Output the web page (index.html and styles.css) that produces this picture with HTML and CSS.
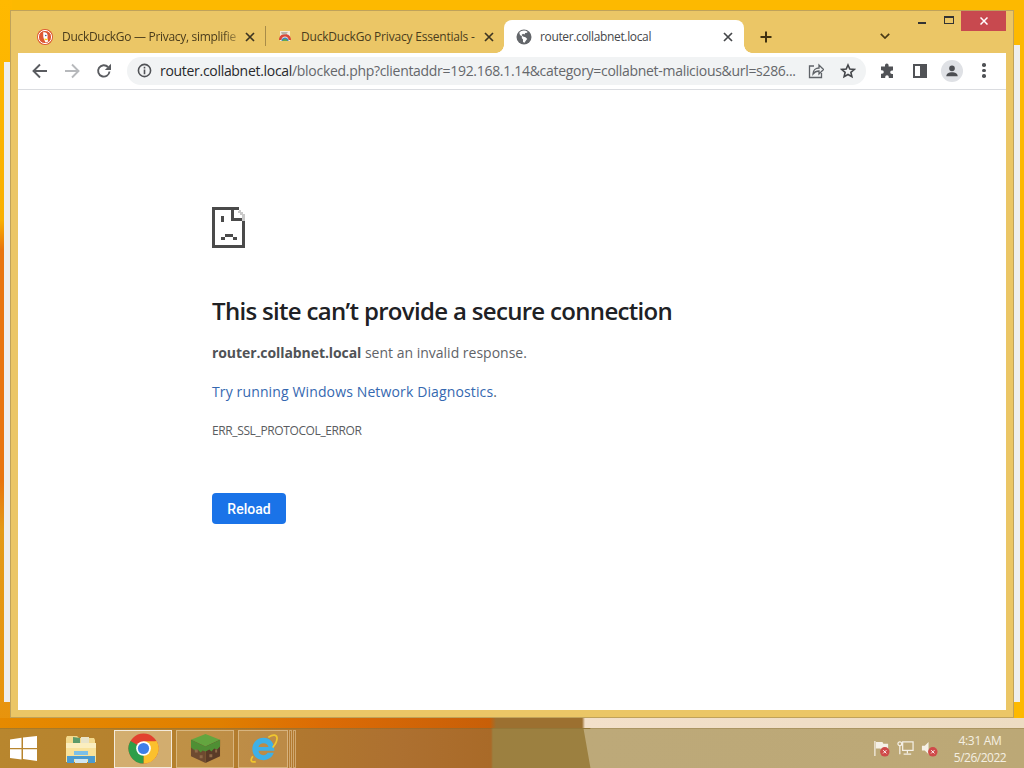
FILE: index.html
```html
<!DOCTYPE html>
<html lang="en">
<head>
<meta charset="utf-8">
<title>router.collabnet.local</title>
<link rel="stylesheet" href="styles.css">
</head>
<body>
<div class="desktop">
  <div class="strip strip-left"></div>
  <div class="strip strip-right"></div>
  <div class="window">
    <div class="tabstrip">
      <div class="tab tab-one">
        <svg class="favicon" viewBox="0 0 16 16"><circle cx="8" cy="8" r="8" fill="#de5833"/><circle cx="8" cy="8" r="6.6" fill="none" stroke="#fff" stroke-width="1"/><path d="M6 3.600c2.200-.8 4.400.4 4.600 2.800.1 1.300-.2 2-.1 3 .1 1.200.6 2.300.8 3.200l-2.800.8c-.8-1.500-1.900-3.600-2.200-5.600C6.100 6.300 6.500 5 6 3.600z" fill="#fff"/><circle cx="8.800" cy="6.500" r=".8" fill="#2d4f8e"/><path d="M7.500 9.500l3 .6-.2 1.200-2.600-.4z" fill="#fdd20a"/></svg>
        <span class="tab-title fade">DuckDuckGo — Privacy, simplifie</span>
        <svg class="tab-x" viewBox="0 0 10 10"><path d="M1 1l8 8M9 1l-8 8"/></svg>
      </div>
      <div class="divider"></div>
      <div class="tab tab-two">
        <svg class="favicon" viewBox="0 0 16 16"><path d="M3 2h10v10H3z" fill="#f4e9d8"/><path d="M2 11c0-4 3-6 6-6s6 2 6 6h-2.500c0-2-1.500-3.500-3.500-3.500S4.500 9 4.500 11z" fill="#d9483b"/><path d="M4.500 12c0-2 1.500-3.400 3.500-3.400S11.500 10 11.500 12z" fill="#3f7fd1"/><path d="M4 3h7l-2 2.500H5z" fill="#b9b2a6"/><path d="M5.500 12c0-1.300 1.100-2.200 2.500-2.200s2.500.9 2.500 2.200z" fill="#63a84e"/></svg>
        <span class="tab-title">DuckDuckGo Privacy Essentials -</span>
        <svg class="tab-x" viewBox="0 0 10 10"><path d="M1 1l8 8M9 1l-8 8"/></svg>
      </div>
      <div class="tab tab-active">
        <svg class="favicon" viewBox="0 0 16 16"><circle cx="8" cy="8" r="7.500" fill="#63666a"/><path d="M8 1.500c-2 0-3.500.8-4.700 2.200l.7 2.300 2 1.500-.3 1.500 1.300 1.500v2.500l1.500.8 1.800-2.800 1-1-1.800-1.800-2.500-.7L5.500 6 7 4.800l1.500.7.700-1.500 2-.3.300-1C10.500 1.900 9.300 1.500 8 1.500z" fill="#fff"/></svg>
        <span class="tab-title">router.collabnet.local</span>
        <svg class="tab-x" viewBox="0 0 10 10"><path d="M1 1l8 8M9 1l-8 8"/></svg>
      </div>
      <svg class="newtab" viewBox="0 0 12 12"><path d="M6 .5v11M.5 6h11"/></svg>
      <svg class="chevron" viewBox="0 0 10 6"><path d="M.8.8L5 5l4.200-4.200"/></svg>
      <div class="caption">
        <span class="cap-btn"><span class="cap-min"></span></span>
        <span class="cap-btn"><span class="cap-max"></span></span>
        <span class="cap-close"><svg viewBox="0 0 8 8"><path d="M.5.5l7 7M7.500.5l-7 7"/></svg></span>
      </div>
    </div>
    <div class="toolbar">
      <svg class="nav" viewBox="0 0 16 16"><path d="M15 8H2M8 1.500L1.500 8 8 14.500"/></svg>
      <svg class="nav nav-off" viewBox="0 0 16 16"><path d="M1 8h13M8 1.500L14.500 8 8 14.500"/></svg>
      <svg class="nav" viewBox="0 0 16 16"><path d="M13.500 8.500A5.700 5.700 0 1 1 12 4"/><path class="solid" d="M15 .8v6.200H8.800z"/></svg>
      <div class="omnibox">
        <svg class="info" viewBox="0 0 16 16"><circle cx="8" cy="8" r="6.500"/><path d="M8 7v5M8 4v1.800"/></svg>
        <span class="url"><span class="host">router.collabnet.local</span>/blocked.php?clientaddr=192.168.1.14&amp;category=collabnet-malicious&amp;url=s286...</span>
        <svg class="omni-icon share" viewBox="0 0 16 16"><path d="M6 3H1.500v11.500h12V10"/><path d="M5 11c0-4 3-6 6-6V2l4.500 4.500L11 11V8c-2.500 0-4.500 1-6 3z"/></svg>
        <svg class="omni-icon star" viewBox="0 0 16 16"><path d="M8 2l1.800 4.100 4.400.4-3.300 2.900 1 4.300L8 11.500l-3.900 2.200 1-4.300-3.300-2.900 4.400-.4z"/></svg>
      </div>
      <svg class="tool puzzle" viewBox="0 0 16 16"><path d="M6 2.300a1.800 1.800 0 0 1 3.600 0V3.500H14v4h-1a1.800 1.800 0 0 0 0 3.600h1V15H9.800v-1a1.800 1.800 0 0 0-3.600 0v1H2v-4.200h1a1.800 1.800 0 0 0 0-3.600H2V3.500h4z"/></svg>
      <span class="panel"><span class="panel-side"></span></span>
      <span class="avatar"><svg viewBox="0 0 16 16"><circle cx="8" cy="5" r="3.200"/><path d="M1.500 14c0-3 3-4.500 6.500-4.500s6.500 1.500 6.500 4.500z"/></svg></span>
      <span class="menu"><i></i><i></i><i></i></span>
    </div>
    <div class="page">
      <svg class="sad" viewBox="0 0 33 41" shape-rendering="crispEdges"><path d="M0 0h27v3H3v35h27V14h3v27H0z"/><path d="M19 0h3v11h11v3H19z"/><path d="M27 3h2v2h2v2h2v7h-3V8h-2V6h-2z" fill="#c9c9c9"/><path d="M9 9h3v6H9zM13 27h8v3h4v3h-4v-3h-8v3H9v-3h4z"/></svg>
      <h1 class="title">This site can’t provide a secure connection</h1>
      <p class="para"><strong>router.collabnet.local</strong> sent an invalid response.</p>
      <p class="para para-link"><a class="link" href="#">Try running Windows Network Diagnostics</a>.</p>
      <div class="code">ERR_SSL_PROTOCOL_ERROR</div>
      <button class="reload">Reload</button>
    </div>
  </div>
  <div class="taskbar">
    <svg class="start" viewBox="0 0 27 25"><path d="M0 3.500l11.500-1.700v10.200H0zM13 1.600L27 0v12H13zM0 13.300h11.500v10.300L0 22zM13 13.300h14V25l-14-2z"/></svg>
    <svg class="explorer" viewBox="0 0 32 30"><path d="M1 4l1-2h10l2 2h15l1 2v6H1z" fill="#f3d98c"/><path d="M8 3l7 1v6H8z" fill="#5c9a6a"/><path d="M16 3h8v6h-8z" fill="#e9e4c9"/><path d="M1 9h30v19H1z" fill="#f9e29a"/><path d="M1 9h30v5H1z" fill="#fbeebf"/><path d="M2 22h28v7h-7v-4H9v4H2z" fill="#4b9bd0"/><path d="M9 17h14v4H9z" fill="#7cc0e8"/><path d="M10 25h12v4H10z" fill="#cfe6f3"/></svg>
    <div class="task task-active">
      <svg class="task-icon" viewBox="0 0 32 32"><circle cx="16" cy="16" r="15.500" fill="#e2412f"/><path d="M16 16L29.400 8.200A15.500 15.500 0 0 1 16 31.500z" fill="#fbc02d"/><path d="M16 16L16 31.500A15.500 15.500 0 0 1 2.600 8.200z" fill="#2e9e48"/><path d="M16 8.500h13.400A15.500 15.500 0 0 1 22 30z" fill="#fbc02d"/><circle cx="16" cy="16" r="7.600" fill="#fff"/><circle cx="16" cy="16" r="5.800" fill="#3f7fe8"/></svg>
    </div>
    <div class="task task-mc">
      <svg class="task-icon" viewBox="0 0 32 32"><path d="M16 1l15 6-15 7L1 7z" fill="#63a53f"/><path d="M1 7l15 7v17L1 24z" fill="#6e4a30"/><path d="M31 7L16 14v17l15-7z" fill="#5a3b27"/><path d="M1 7l15 7v5l-3-1-2 2-3-3-3 1-4-3zM31 7L16 14v5l4-2 2 2 3-3 3 1 3-3z" fill="#4f8f34"/><path d="M5 17h3v3H5zM10 23h3v3h-3zM20 22h3v3h-3zM26 17h2v3h-2z" fill="#8f6a48"/></svg>
    </div>
    <div class="task task-ie">
      <svg class="task-icon" viewBox="0 0 32 32"><path d="M16 5a11.500 11.500 0 0 0-11.500 11.500C4.500 23 9.500 28 16 28c5 0 9.200-3 10.600-7.500h-6.400c-.8 1.500-2.400 2.400-4.200 2.400-2.800 0-4.900-1.800-5.200-4.500h16.400C27.500 11.500 24 5 16 5zm-5.200 9.500c.4-2.400 2.600-4 5.200-4s4.800 1.600 5.200 4z" fill="#3fb0e6"/><path d="M5 24C2 28 3 31 8 29.500M21 4.500c5-3.500 9-3 9 1 0 3-2 6.500-4.500 9.500" fill="none" stroke="#f0c62e" stroke-width="1.800"/></svg>
    </div>
    <div class="task-stub"></div>
    <div class="task-stub"></div>
    <div class="spacer"></div>
    <svg class="tray" viewBox="0 0 18 18"><path d="M2 1v16" class="tr-line"/><path d="M3 2h7l1 2h5v7H9l-1-2H3z" fill="#f5f0e6"/><circle cx="12.500" cy="12.500" r="5" fill="#cf4a4a"/><path d="M10.800 10.800l3.400 3.400M14.200 10.800l-3.400 3.400" class="tr-x"/></svg>
    <svg class="tray" viewBox="0 0 18 18"><rect x="6" y="2" width="11" height="9" class="tr-box"/><circle cx="3" cy="4" r="2" class="tr-box"/><path d="M3 6v9M11 11v3M7 15h8" class="tr-line"/></svg>
    <svg class="tray" viewBox="0 0 18 18"><path d="M1 6h3l4-4v13l-4-4H1z" fill="#f5f0e6"/><circle cx="12.500" cy="12.500" r="5" fill="#cf4a4a"/><path d="M10.800 10.800l3.400 3.400M14.200 10.800l-3.400 3.400" class="tr-x"/></svg>
    <div class="clock"><span>4:31 AM</span><span class="date">5/26/2022</span></div>
  </div>
</div>
</body>
</html>
```
FILE: styles.css
```css
* { box-sizing: border-box; }
html, body { margin: 0; padding: 0; }
body { font-family: "Open Sans", "Noto Sans", sans-serif; }
.desktop {
  position: relative;
  width: 1024px;
  height: 768px;
  overflow: hidden;
  display: flex;
  flex-direction: column;
  justify-content: flex-end;
  background-color: #fdb900;
  background-image:
    linear-gradient(90deg, #e68a00 0, #e07f00 220px, #dc6c05 320px, #c85f08 490px, #9c7030 496px, #9c7030 582px, #f3e0ca 585px, #eddcc2 1024px),
    linear-gradient(180deg, #ffb900 0, #f9b000 220px, #e8740e 250px, #e8740e 480px, #e39a18 530px, #e9920a 768px);
  background-size: 100% 12px, 12px 100%;
  background-position: 0 718px, 0 0;
  background-repeat: no-repeat;
}
.strip {
  position: absolute;
  width: 6px;
  background: #eeeeee;
}
.strip-left { left: 4px; top: 62px; height: 640px; }
.strip-right { left: 1014px; top: 45px; height: 657px; }
.window {
  position: absolute;
  left: 10px;
  top: 10px;
  width: 1004px;
  height: 708px;
  background: #ebc666;
  border: 1px solid #c0a25a;
  padding: 0 7px 7px;
  display: flex;
  flex-direction: column;
}
.tabstrip {
  height: 42px;
  flex: none;
  display: flex;
  align-items: flex-end;
  position: relative;
  padding-left: 7px;
}
.tab {
  height: 33px;
  display: flex;
  align-items: center;
  flex: none;
  font-size: 12px;
  color: #4a3c1c;
}
.tab-one { padding-left: 12px; width: 240px; }
.tab-two { padding-left: 11px; width: 231px; }
.tab-active {
  position: relative;
  width: 240px;
  background: #fff;
  border-radius: 8px 8px 0 0;
  padding-left: 12px;
  color: #45474a;
  margin-left: 7px;
}
.tab-active::before,
.tab-active::after {
  content: "";
  position: absolute;
  bottom: 0;
  width: 8px;
  height: 8px;
}
.tab-active::before {
  left: -8px;
  background: radial-gradient(circle at 0 0, transparent 7.500px, #fff 8px);
}
.tab-active::after {
  right: -8px;
  background: radial-gradient(circle at 100% 0, transparent 7.500px, #fff 8px);
}
.divider { width: 1px; height: 20px; background: #a88c48; margin-bottom: 7px; flex: none; }
.favicon { width: 16px; height: 16px; flex: none; }
.tab-title {
  flex: 1;
  min-width: 0;
  margin-left: 9px;
  white-space: nowrap;
  letter-spacing: -.2px;
}
.tab-one .tab-title { letter-spacing: -.3px; }
.tab-two .tab-title { margin-left: 8px; }
.tab-active .tab-title { margin-left: 8px; letter-spacing: -.35px; }
.fade {
  -webkit-mask-image: linear-gradient(90deg, #000 88%, rgba(0, 0, 0, .25) 97%);
  mask-image: linear-gradient(90deg, #000 88%, rgba(0, 0, 0, .25) 97%);
}
.tab-x {
  width: 10px;
  height: 10px;
  flex: none;
  margin: 0 10px 0 0;
  fill: none;
  stroke: #3d3522;
  stroke-width: 1.700;
}
.tab-two .tab-x { margin-right: 3px; }
.tab-active .tab-x { stroke: #45474a; margin-right: 11px; }
.newtab {
  width: 12px; height: 12px;
  margin: 0 0 10px 16px;
  flex: none;
  fill: none;
  stroke: #3f3010;
  stroke-width: 2;
}
.chevron {
  width: 10px; height: 6px;
  margin: 0 0 14px 108px;
  flex: none;
  fill: none;
  stroke: #4a3a14;
  stroke-width: 1.700;
}
.caption {
  position: absolute;
  right: 0;
  top: 0;
  display: flex;
  align-items: flex-start;
}
.cap-btn { width: 27px; height: 20px; display: flex; align-items: center; justify-content: center; }
.cap-min { width: 8px; height: 2px; background: #333; margin-top: 3px; }
.cap-max { width: 10px; height: 8px; border: 1px solid #333; border-top-width: 2px; margin-top: -2px; }
.cap-close {
  width: 45px; height: 20px;
  background: #c8494f;
  display: flex; align-items: center; justify-content: center;
  margin-left: -1px;
}
.cap-close svg { width: 8px; height: 8px; fill: none; stroke: #fff; stroke-width: 1.500; }
.toolbar {
  height: 37px;
  flex: none;
  background: #fff;
  border-bottom: 1px solid #dadce0;
  display: flex;
  align-items: center;
  padding: 0 0 1px 14px;
}
.nav {
  width: 16px; height: 16px;
  flex: none;
  margin-right: 16px;
  fill: none;
  stroke: #5a5c60;
  stroke-width: 1.900;
}
.nav-off { stroke: #b7b9bc; }
.nav .solid { fill: #5a5c60; stroke: none; }
.omnibox {
  width: 739px;
  height: 28px;
  flex: none;
  margin-left: -1px;
  border-radius: 14px;
  background: #f1f3f4;
  display: flex;
  align-items: center;
  padding-left: 10px;
}
.info { width: 15px; height: 15px; flex: none; fill: none; stroke: #505256; stroke-width: 1.700; }
.url {
  margin-left: 8px;
  width: 640px;
  flex: none;
  font-size: 14px;
  color: #65676b;
  white-space: nowrap;
  overflow: hidden;
  letter-spacing: -.3px;
}
.host { color: #28292c; }
.omni-icon { width: 16px; height: 16px; flex: none; fill: none; stroke: #5f6368; stroke-width: 1.300; }
.share { margin-left: 8px; }
.star { margin-left: 16px; stroke: #44464a; stroke-width: 1.600; }
.tool { width: 16px; height: 16px; flex: none; }
.puzzle { fill: #505256; margin-left: 13px; }
.panel {
  width: 14px; height: 14px;
  flex: none;
  margin-left: 18px;
  border: 2px solid #505256;
  display: flex;
  justify-content: flex-end;
}
.panel-side { width: 5px; background: #505256; }
.avatar {
  width: 22px; height: 22px;
  flex: none;
  margin-left: 14px;
  border-radius: 50%;
  background: #dfe1e5;
  display: flex;
  align-items: center;
  justify-content: center;
}
.avatar svg { width: 14px; height: 14px; fill: #4c4e52; }
.menu {
  width: 4px;
  flex: none;
  margin-left: 19px;
  display: flex;
  flex-direction: column;
  gap: 2px;
}
.menu i { width: 3.500px; height: 3.500px; border-radius: 50%; background: #505256; }
.page {
  flex: 1;
  background: #fff;
  padding: 117px 0 0 194px;
  color: #5f6368;
  font-size: 14px;
}
.sad { display: block; width: 33px; height: 41px; fill: #4a4a4a; }
.title {
  margin: 46px 0 0;
  font-size: 24px;
  line-height: 34px;
  font-weight: 600;
  color: #202124;
  letter-spacing: -.68px;
}
.para { margin: 13px 0 0; line-height: 24px; }
.para-link { margin-top: 15px; letter-spacing: .13px; }
.para strong { font-weight: 700; color: #4f5256; letter-spacing: -.08px; }
.link { color: #3568b0; text-decoration: none; }
.code {
  margin-top: 16px;
  font-size: 12px;
  line-height: 22px;
  letter-spacing: -.38px;
  color: #5a5c60;
}
.reload {
  display: block;
  margin-top: 51px;
  width: 74px;
  height: 31px;
  padding: 0;
  border: 0;
  border-radius: 4px;
  background: #1a73e8;
  color: #fff;
  font-family: Roboto, sans-serif;
  font-size: 14px;
  font-weight: 500;
}
.taskbar {
  height: 40px;
  flex: none;
  position: relative;
  display: flex;
  align-items: center;
  padding-left: 10px;
  background:
    linear-gradient(80deg, transparent 581px, #bda979 582px, #bca876 1015px),
    linear-gradient(90deg, #b8862e 0, #b47f2e 200px, #ad7030 400px, #a96a28 491px, #9c8040 493px, #9c8040 1024px);
  border-top: 1px solid rgba(120, 90, 30, .25);
}
.start { width: 27px; height: 25px; flex: none; fill: #fff; }
.explorer { width: 32px; height: 30px; flex: none; margin-left: 28px; }
.task {
  height: 38px;
  flex: none;
  display: flex;
  align-items: center;
  justify-content: center;
  border: 1px solid rgba(255, 240, 210, .4);
  background: rgba(255, 240, 210, .15);
  margin-left: 4px;
}
.task-active {
  width: 58px;
  margin-left: 17px;
  border: 1px solid rgba(255, 255, 255, .75);
  background: rgba(255, 240, 210, .4);
}
.task-mc { width: 58px; }
.task-ie { width: 50px; }
.task-stub {
  width: 3px;
  height: 38px;
  flex: none;
  margin-left: 1px;
  border: 1px solid rgba(255, 240, 210, .4);
}
.task-icon { width: 31px; height: 31px; }
.spacer { flex: 1; }
.tray { width: 17px; height: 17px; flex: none; margin-right: 7px; }
.tr-line { fill: none; stroke: #f5f0e6; stroke-width: 1.300; }
.tr-box { fill: none; stroke: #f5f0e6; stroke-width: 1.300; }
.tr-x { fill: none; stroke: #fff; stroke-width: 1; }
.clock {
  width: 70px;
  margin-right: 9px;
  flex: none;
  display: flex;
  flex-direction: column;
  align-items: center;
  color: #f4efe2;
  font-size: 12px;
  line-height: 17px;
  letter-spacing: -.3px;
}
.date { letter-spacing: -.5px; }
```
